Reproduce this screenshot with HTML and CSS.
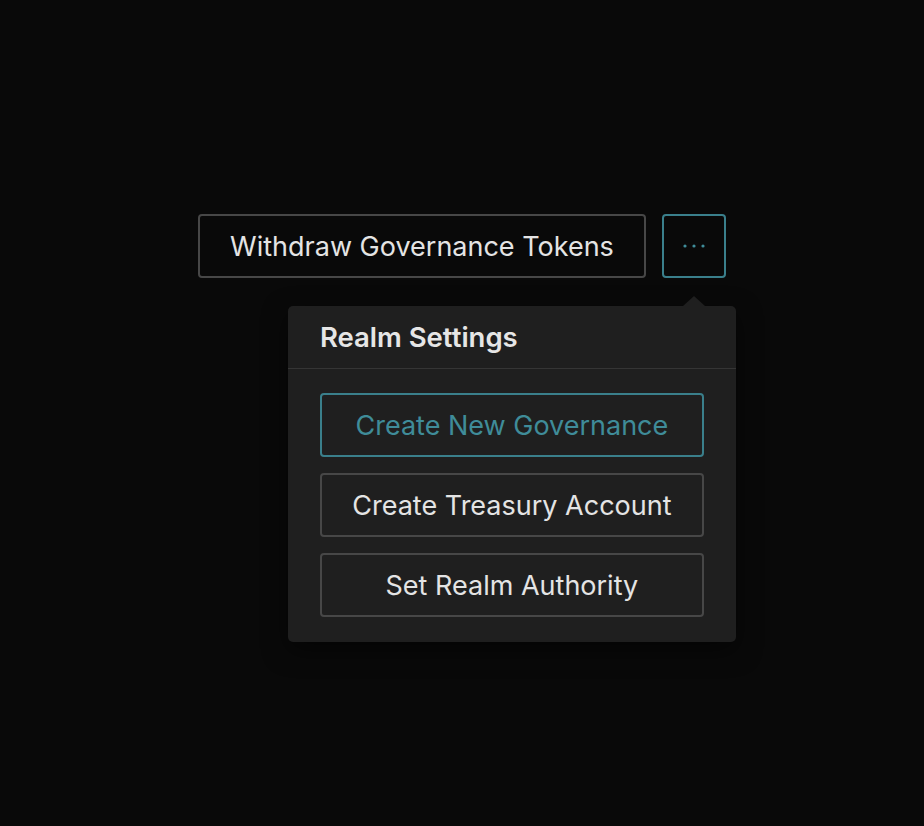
FILE: index.html
```html
<!DOCTYPE html>
<html>
<head>
<meta charset="utf-8">
<link rel="stylesheet" href="styles.css">
</head>
<body>
<div class="bar">
  <button class="btn">Withdraw Governance Tokens</button>
  <div class="more-wrap">
    <button class="btn more" aria-label="More">
      <svg width="24" height="6" viewBox="0 0 24 6"><circle cx="3" cy="3" r="1.6"/><circle cx="12" cy="3" r="1.6"/><circle cx="21" cy="3" r="1.6"/></svg>
    </button>
    <div class="menu">
      <div class="menu-head">Realm Settings</div>
      <div class="menu-body">
        <button class="btn item active">Create New Governance</button>
        <button class="btn item">Create Treasury Account</button>
        <button class="btn item">Set Realm Authority</button>
      </div>
    </div>
  </div>
</div>
</body>
</html>
```
FILE: styles.css
```css
* { box-sizing: border-box; }
html, body { margin: 0; height: 100%; }
body {
  background: #090909;
  font-family: Inter, "Noto Sans", sans-serif;
  color: #e4e4e4;
}
.bar {
  display: flex;
  justify-content: center;
  gap: 16px;
  padding-top: 214px;
}
.btn {
  height: 64px;
  padding: 0 30px;
  background: transparent;
  border: 2px solid #474747;
  border-radius: 4px;
  color: #e4e4e4;
  font-family: inherit;
  font-size: 27px;
  font-weight: 400;
  cursor: pointer;
}
.more-wrap { position: relative; }
.more {
  width: 64px;
  padding: 0;
  border-color: #3a7f8b;
  display: flex;
  align-items: center;
  justify-content: center;
}
.more svg { fill: #3f8c99; }
.menu {
  position: absolute;
  top: 92px;
  right: -10px;
  width: 448px;
  background: #1f1f1f;
  border-radius: 5px;
  box-shadow: 0 8px 24px rgba(0,0,0,0.5);
}
.menu::before {
  content: "";
  position: absolute;
  top: -10px;
  right: 31px;
  border-left: 11px solid transparent;
  border-right: 11px solid transparent;
  border-bottom: 10px solid #1f1f1f;
}
.menu-head {
  height: 63px;
  padding: 0 32px;
  display: flex;
  align-items: center;
  font-size: 27.5px;
  font-weight: 600;
  color: #e6e6e6;
  border-bottom: 1px solid #353535;
}
.menu-body {
  display: flex;
  flex-direction: column;
  gap: 16px;
  padding: 24px 32px 25px;
}
.item { width: 100%; padding: 0; }
.item.active {
  border-color: #3a7f8b;
  color: #3f8c99;
}
```
